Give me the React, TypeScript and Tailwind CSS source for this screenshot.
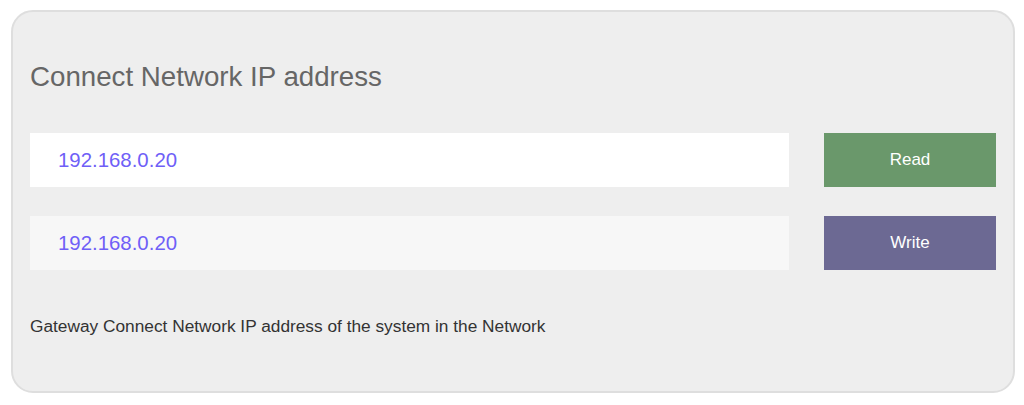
const rows = [
  { bg: "bg-white", label: "Read", btn: "bg-[#6a986b]" },
  { bg: "bg-[#f7f7f7]", label: "Write", btn: "bg-[#6c6993]" },
];

const App = () => {
  return (
    <div className="w-[1024px] h-[405px] bg-white pt-[10px] pl-[11px] font-['Liberation_Sans',Arial,sans-serif]">
      <div className="w-[1004px] h-[383px] rounded-[22px] border-2 border-[#dedede] bg-[#eeeeee] px-[17px] pt-[49px]">
        <h1 className="text-[27.7px] leading-[32px] text-[#666666]">Connect Network IP address</h1>

        <div className="mt-[40px] flex flex-col gap-[29px]">
          {rows.map((r) => (
            <div key={r.label} className="flex items-center gap-[35px]">
              <div className={`${r.bg} w-[759px] h-[54px] flex items-center pl-[28px] text-[20.4px] text-[#6f5ff7]`}>
                192.168.0.20
              </div>
              <button className={`${r.btn} w-[172px] h-[54px] text-[17px] text-white`}>{r.label}</button>
            </div>
          ))}
        </div>

        <p className="mt-[46px] text-[17.3px] leading-[20px] text-[#333333]">
          Gateway Connect Network IP address of the system in the Network
        </p>
      </div>
    </div>
  );
};

export default App;
